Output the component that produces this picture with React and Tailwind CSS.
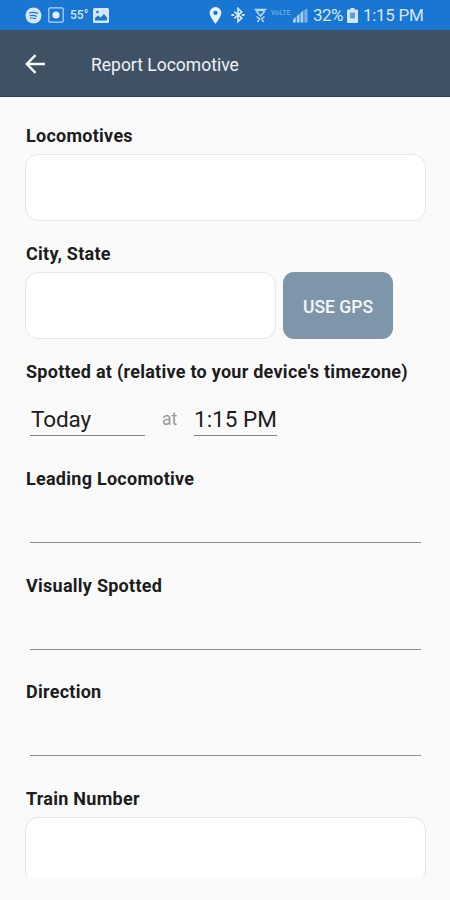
export default function App() {
  return (
    <div className="flex h-[900px] w-[450px] flex-col overflow-hidden bg-[#fafafa] font-['Roboto',sans-serif] text-[#1c1c1c]">
      <StatusBar />

      <header className="flex h-[67px] shrink-0 items-center border-b border-[#2f4358] bg-[#405163] pl-[25px] pt-px text-[#eef3f8]">
        <svg width="21" height="20" viewBox="0 0 21 20" fill="none" stroke="#f6f9fb" strokeWidth="2.4">
          <path d="M20 10H2M10.5 1.2L1.8 10l8.700 8.800" />
        </svg>
        <h1 className="ml-[45px] mt-0.5 text-[17.500px] leading-6">Report Locomotive</h1>
      </header>

      <main className="h-[781px] shrink-0 overflow-hidden px-[25px] pt-[27px]">
        <section className="h-[118px]">
          <Label>Locomotives</Label>
          <TextBox className="w-[401px]" />
        </section>

        <section className="h-[118px]">
          <Label>City, State</Label>
          <div className="flex gap-[7px]">
            <TextBox className="w-[251px]" />
            <button
              type="button"
              className="mt-[6px] h-[67px] w-[110px] rounded-[11px] bg-[#7f95aa] pt-1 text-[17.500px] font-medium text-[#f3f7fb]"
            >
              USE GPS
            </button>
          </div>
        </section>

        <section className="h-[107px]">
          <Label>Spotted at (relative to your device&apos;s timezone)</Label>
          <div className="flex pl-[5px] pt-[19px] text-[22.500px] leading-8">
            <div className="h-[33px] w-[115px] border-b border-[#858585] pl-px tracking-[-0.100px]">Today</div>
            <div className="w-[49px] pl-[17px] text-[17.500px] text-[#9a9a9a]">at</div>
            <div className="h-[33px] w-[83px] whitespace-nowrap border-b border-[#858585]">1:15 PM</div>
          </div>
        </section>

        <Picker label="Leading Locomotive" />
        <Picker label="Visually Spotted" />
        <Picker label="Direction" />

        <section>
          <Label>Train Number</Label>
          <TextBox className="w-[401px]" />
        </section>
      </main>
    </div>
  );
}

function Label({ children }) {
  return (
    <div className="h-6 whitespace-nowrap pl-px text-[18px] font-bold leading-6 tracking-[0.260px]">
      {children}
    </div>
  );
}

function TextBox({ className = "" }) {
  return (
    <div className={`mt-[6px] h-[67px] rounded-[13px] border border-[#e6e6e6] bg-white ${className}`} />
  );
}

function Picker({ label }) {
  return (
    <section className="h-[106.500px]">
      <Label>{label}</Label>
      <div className="ml-[5px] h-[52px] w-[391px] border-b border-[#8e8e8e]" />
    </section>
  );
}

function StatusBar() {
  return (
    <div className="flex h-[30px] shrink-0 items-center bg-[#1976d2] pl-[25px] text-[#d5e8fa]">
      <svg width="17" height="17" viewBox="0 0 17 17">
        <circle cx="8.5" cy="8.500" r="8" fill="#d5e8fa" />
        <path d="M4 6c3-1 6-.8 9 .5M4.500 8.700c2.500-.6 5-.4 7.500.7M5 11.200c2-.4 4-.3 6 .6" fill="none" stroke="#1976d2" strokeWidth="1.100" />
      </svg>
      <svg className="ml-1.5" width="16" height="16" viewBox="0 0 16 16">
        <rect x="0.800" y="0.800" width="14.400" height="14.400" rx="1.500" fill="none" stroke="#b9d9f7" strokeWidth="1.200" />
        <circle cx="8" cy="8" r="3.600" fill="#e3f1fd" />
      </svg>
      <span className="ml-1.5 w-[19px] whitespace-nowrap text-[12px] font-medium leading-4">55°</span>
      <svg className="ml-[4px]" width="16" height="15" viewBox="0 0 16 15">
        <rect width="16" height="15" rx="1.500" fill="#d5e8fa" />
        <path d="M2 12.500V10l3-2.500 2.500 2L11 6l3 3.500v3z" fill="#1976d2" />
        <circle cx="4.500" cy="4" r="1.300" fill="#1976d2" />
      </svg>

      <svg className="ml-[100px]" width="13" height="17" viewBox="0 0 13 18">
        <path d="M6.500 0A6.200 6.200 0 0 0 .3 6.200C.3 10.500 6.500 18 6.500 18s6.200-7.500 6.200-11.800A6.200 6.200 0 0 0 6.500 0zm0 8.500a2.300 2.300 0 1 1 0-4.600 2.300 2.300 0 0 1 0 4.600z" fill="#e6f2fd" />
      </svg>
      <svg className="ml-[8px]" width="16" height="16" viewBox="0 0 16 17" fill="none" stroke="#d5e8fa" strokeWidth="1.800">
        <path d="M4 4.800l8 7-4 3.700v-14l4 3.700-8 7" />
        <path d="M1 8.500h3M12 8.500h3" strokeWidth="2" />
      </svg>
      <svg className="ml-[8px]" width="13" height="15" viewBox="0 0 13 15" fill="none" stroke="#b9d9f7" strokeWidth="1.500">
        <path d="M.5 1.500h12M2.500 3.500c2.500-1.500 5.500-1.500 8 0L6.500 8z" />
        <path d="M2.500 8.500l3 2.500-2 3M10.500 8.500l-3 2.500 2 3" />
      </svg>
      <span className="-mt-1 ml-[4px] w-[19px] text-[7px] font-medium leading-3 text-[#73aee7]">VoLTE</span>
      <svg className="ml-[3px]" width="15" height="15" viewBox="0 0 16 15" fill="#a9d0f5">
        <path d="M0 15v-3l3-2.800V15zM4 15V8.300l3-2.800V15zM8 15V4.700l3-2.800V15z" />
        <path d="M12 15V1.500L15.500 0v15z" opacity=".65" />
      </svg>
      <span className="ml-[5px] w-[31px] whitespace-nowrap text-[17px] leading-5 tracking-[-0.500px]">32%</span>
      <svg className="ml-[3px]" width="11" height="15" viewBox="0 0 11 15">
        <path d="M3.500 0h4v1.500H10a1 1 0 0 1 1 1V14a1 1 0 0 1-1 1H1a1 1 0 0 1-1-1V2.500a1 1 0 0 1 1-1h2.500z" fill="#d5e8fa" />
        <path d="M3 4.500h5v6H3z" fill="#5a9fe0" />
      </svg>
      <span className="ml-[5px] whitespace-nowrap text-[17px] leading-5 tracking-[-0.300px]">1:15 PM</span>
    </div>
  );
}
